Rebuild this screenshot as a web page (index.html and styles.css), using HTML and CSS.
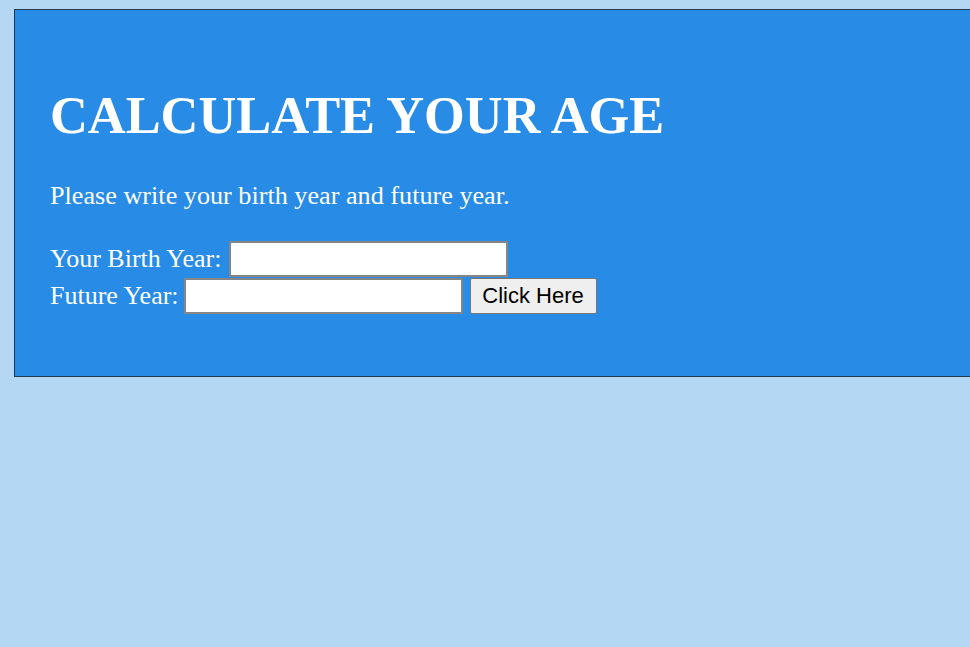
FILE: index.html
```html
<!DOCTYPE html>
<html>
<head>
<meta charset="utf-8">
<link rel="stylesheet" href="styles.css">
</head>
<body>
<div class="panel">
  <h1 class="title">CALCULATE YOUR AGE</h1>
  <p class="intro">Please write your birth year and future year.</p>
  <form class="form">
    <div class="row">
      <label class="label">Your Birth Year:</label>
      <input class="field" type="text">
    </div>
    <div class="row">
      <label class="label label-tight">Future Year:</label>
      <input class="field" type="text">
      <button class="btn" type="button">Click Here</button>
    </div>
  </form>
</div>
</body>
</html>
```
FILE: styles.css
```css
html, body {
  margin: 0;
  padding: 0;
}
body {
  background: #b4d8f4;
  font-family: "Liberation Serif", "Times New Roman", serif;
  overflow: hidden;
  height: 647px;
}
.panel {
  margin: 9px 0 0 14px;
  width: 1100px;
  height: 368px;
  box-sizing: border-box;
  background: #288be6;
  border: 1px solid #233a4e;
  padding: 0 0 0 35px;
  color: #ffffff;
}
.title {
  margin: 0;
  padding-top: 75px;
  font-size: 52.4px;
  line-height: 60px;
  font-weight: bold;
}
.intro {
  margin: 36px 0 0 0;
  font-size: 26.2px;
  line-height: 30px;
}
.form {
  margin-top: 29px;
}
.row {
  display: flex;
  align-items: center;
  height: 37px;
}
.label {
  font-size: 26px;
  line-height: 30px;
  margin-right: 8px;
}
.label-tight {
  margin-right: 5px;
}
.field {
  width: 279px;
  height: 36px;
  box-sizing: border-box;
  border: 2px solid #858585;
  background: #fff;
  margin: 0;
  padding: 0;
}
.btn {
  margin-left: 7px;
  width: 127px;
  height: 36px;
  font-family: "Liberation Sans", Arial, sans-serif;
  font-size: 22px;
  color: #000;
  background: #efefef;
  border: 1px solid #767676;
  border-radius: 2px;
  padding: 0;
}
```
